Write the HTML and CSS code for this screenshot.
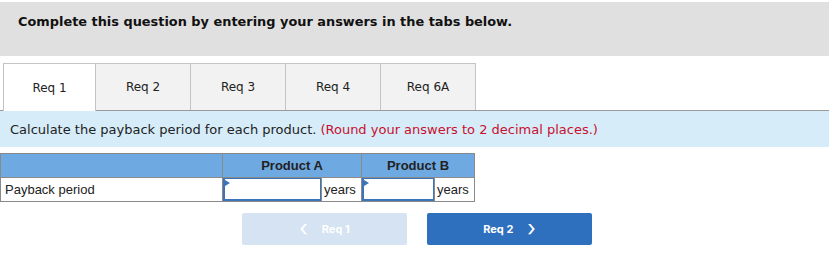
FILE: index.html
```html
<!DOCTYPE html>
<html lang="en">
<head>
    <meta charset="UTF-8">
    <title>Payback Period</title>
    <link rel="stylesheet" href="styles.css">
</head>
<body>
    <div class="question-head">
        <h1>Complete this question by entering your answers in the tabs below.</h1>
    </div>

    <div class="tabs">
        <a href="#" class="tab active">Req 1</a>
        <a href="#" class="tab">Req 2</a>
        <a href="#" class="tab">Req 3</a>
        <a href="#" class="tab">Req 4</a>
        <a href="#" class="tab">Req 6A</a>
    </div>

    <div class="instructions">
        Calculate the payback period for each product. <span class="note">(Round your answers to 2 decimal places.)</span>
    </div>

    <table class="answer-table">
        <thead>
            <tr>
                <th class="label-col"></th>
                <th colspan="2">Product A</th>
                <th colspan="2">Product B</th>
            </tr>
        </thead>
        <tbody>
            <tr>
                <td class="label-col">Payback period</td>
                <td class="input-cell a"><input type="text"></td>
                <td class="unit">years</td>
                <td class="input-cell b"><input type="text"></td>
                <td class="unit">years</td>
            </tr>
        </tbody>
    </table>

    <div class="nav-buttons">
        <button class="nav prev" disabled><span class="chev">&lsaquo;</span> Req 1</button>
        <button class="nav next">Req 2 <span class="chev">&rsaquo;</span></button>
    </div>
</body>
</html>
```

FILE: styles.css
```css
body {
    margin: 0;
    padding-top: 2px;
    font-family: 'DejaVu Sans', Verdana, sans-serif;
    color: #222;
    background: #fff;
}

.question-head {
    box-sizing: border-box;
    background: #e0e0e0;
    height: 54px;
    padding: 12px 0 0 18px;
}

.question-head h1 {
    margin: 0;
    font-size: 12.9px;
    line-height: 16px;
    font-weight: 700;
    color: #111;
}

.tabs {
    display: flex;
    margin-top: 7px;
    padding-left: 3px;
    border-bottom: 1px solid #9a9a9a;
}

.tab {
    box-sizing: border-box;
    width: 96px;
    height: 47px;
    display: flex;
    align-items: center;
    justify-content: center;
    font-size: 12px;
    color: #222;
    text-decoration: none;
    background: #f2f2f2;
    border: 1px solid #c4c4c4;
    border-bottom: none;
    margin-left: -1px;
}

.tab:first-child {
    margin-left: 0;
    width: 93px;
}

.tab.active {
    background: #fff;
    height: 48px;
    margin-bottom: -1px;
    border-color: #c4c4c4;
}

.instructions {
    background: #d6ecf9;
    height: 36px;
    display: flex;
    align-items: center;
    padding-left: 10px;
    font-size: 13px;
    color: #222;
}

.instructions .note {
    color: #c8102e;
    margin-left: 4px;
}

.answer-table {
    margin-top: 6px;
    border-collapse: collapse;
    font-family: 'Liberation Sans', Arial, sans-serif;
    font-size: 13px;
}

.answer-table th,
.answer-table td {
    border: 1px solid #8a8a8a;
    padding: 0;
}

.answer-table th {
    background: #6fa9e2;
    color: #222;
    font-weight: 700;
    height: 23px;
}

.answer-table td {
    height: 23px;
}

.label-col {
    width: 217px;
    padding-left: 4px !important;
    text-align: left;
}

.input-cell {
    position: relative;
}

.input-cell.a {
    width: 98px;
}

.input-cell.b {
    width: 72px;
}

.input-cell input {
    box-sizing: border-box;
    display: block;
    width: 100%;
    height: 23px;
    margin: 0;
    border: 2px solid #3a74b9;
    border-top-width: 1px;
    border-right-width: 1px;
    outline: none;
    background: #fff;
}

.input-cell::before {
    content: "";
    position: absolute;
    left: 2px;
    top: 2px;
    border-left: 5px solid #3a74b9;
    border-top: 3px solid transparent;
    border-bottom: 3px solid transparent;
}

.unit {
    padding: 0 0 0 2px !important;
    width: 37px;
}

.nav-buttons {
    display: flex;
    gap: 20px;
    margin-top: 11px;
    padding-left: 242px;
}

.nav {
    width: 165px;
    height: 32px;
    border: none;
    border-radius: 2px;
    color: #fff;
    font-family: Inter, 'Open Sans', sans-serif;
    font-size: 11px;
    font-weight: 700;
    display: flex;
    align-items: center;
    justify-content: center;
    gap: 14px;
    cursor: pointer;
}

.nav .chev {
    font-size: 22px;
    font-weight: 400;
    line-height: 1;
    margin-top: -3px;
}

.prev {
    background: #d5e3f3;
    cursor: default;
}

.next {
    background: #2f70be;
}
```
